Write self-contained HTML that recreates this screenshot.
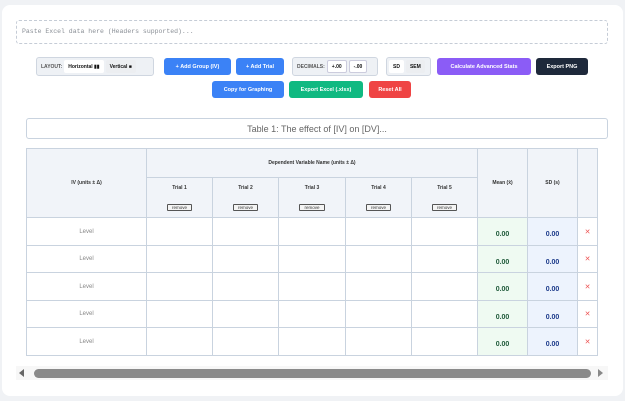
<!DOCTYPE html>
<html><head><style>
*{box-sizing:border-box;margin:0;padding:0}
body{width:625px;height:401px;background:#f0f2f5;font-family:"Liberation Sans",sans-serif;position:relative;overflow:hidden}
.card{position:absolute;left:2px;top:5px;width:621px;height:391px;background:#fff;border-radius:8px}
.abs{position:absolute}
.ta{left:16px;top:20px;width:592px;height:24px;border:1px dashed #c5ccd6;border-radius:3px;font-family:"Liberation Mono",monospace;font-size:6.5px;color:#8a8f96;padding:7px 5px}
.btn{position:absolute;height:17px;border-radius:3px;color:#fff;font-size:5.5px;font-weight:bold;display:flex;align-items:center;justify-content:center}
.grp{position:absolute;height:19px;border:1px solid #cfd6e0;border-radius:3px;background:#eef1f5;font-size:5px;font-weight:bold;color:#555;display:flex;align-items:center;padding-left:4px;gap:2px}
.opt{background:#fff;border-radius:2px;height:13px;display:flex;align-items:center;padding:0 4px;color:#111}
.opt.off{background:#eceef1}
table{position:absolute;left:26px;top:148px;border-collapse:collapse;font-size:5px}
td,th{border:1px solid #c9d3df;text-align:center}
th{background:#f1f4f9;font-weight:bold;color:#333}
.rm{display:inline-block;border:1px solid #555;border-radius:1px;font-size:4.5px;line-height:5px;padding:0 4px;font-weight:normal;color:#333;margin-top:13px;background:#f4f4f4}
.lv{color:#888;font-size:6px}
.m{background:#effaf2;color:#1f5a3a;font-weight:bold;font-size:7px;padding-top:6px}
.s{background:#edf3fd;color:#1c3a8a;font-weight:bold;font-size:7px;padding-top:6px}
.x{color:#e55;font-size:7px;vertical-align:middle}
</style></head><body>
<div class="card"></div>
<div class="abs ta">Paste Excel data here (Headers supported)...</div>
<div class="grp" style="left:36px;top:57px;width:118px">LAYOUT: <span class="opt">Horizontal ▮▮</span><span class="opt off">Vertical ■</span></div>
<div class="btn" style="left:164px;top:58px;width:67px;background:#3b82f6">+ Add Group (IV)</div>
<div class="btn" style="left:236px;top:58px;width:48px;background:#3b82f6">+ Add Trial</div>
<div class="grp" style="left:292px;top:57px;width:86px">DECIMALS: <span class="opt" style="border:1px solid #ccd">+.00</span><span class="opt" style="border:1px solid #ccd">-.00</span></div>
<div class="grp" style="left:386px;top:57px;width:45px;padding-left:2px">
<span class="opt">SD</span><span class="opt off">SEM</span></div>
<div class="btn" style="left:437px;top:58px;width:94px;background:#8b5cf6">Calculate Advanced Stats</div>
<div class="btn" style="left:536px;top:58px;width:52px;background:#1e293b">Export PNG</div>
<div class="btn" style="left:212px;top:81px;width:72px;background:#3b82f6">Copy for Graphing</div>
<div class="btn" style="left:289px;top:81px;width:74px;background:#10b981">Export Excel (.xlsx)</div>
<div class="btn" style="left:369px;top:81px;width:42px;background:#ef4444">Reset All</div>
<div class="abs" style="left:26px;top:118px;width:582px;height:21px;border:1px solid #c9d3df;border-radius:3px;font-size:9px;color:#666;text-align:center;line-height:20px">Table 1: The effect of [IV] on [DV]...</div>
<table>
<tr style="height:29px"><th rowspan="2" style="width:120px">IV (units ± Δ)</th><th colspan="5">Dependent Variable Name (units ± Δ)</th><th rowspan="2" style="width:50px">Mean (x̄)</th><th rowspan="2" style="width:50px">SD (s)</th><th rowspan="2" style="width:20px"></th></tr>
<tr style="height:40px"><th style="width:66px">Trial 1<br><span class="rm">remove</span></th><th style="width:66px">Trial 2<br><span class="rm">remove</span></th><th style="width:67px">Trial 3<br><span class="rm">remove</span></th><th style="width:66px">Trial 4<br><span class="rm">remove</span></th><th style="width:66px">Trial 5<br><span class="rm">remove</span></th></tr>
<tr style="height:28px"><td class="lv">Level</td><td></td><td></td><td></td><td></td><td></td><td class="m">0.00</td><td class="s">0.00</td><td class="x">✕</td></tr>
<tr style="height:27px"><td class="lv">Level</td><td></td><td></td><td></td><td></td><td></td><td class="m">0.00</td><td class="s">0.00</td><td class="x">✕</td></tr>
<tr style="height:28px"><td class="lv">Level</td><td></td><td></td><td></td><td></td><td></td><td class="m">0.00</td><td class="s">0.00</td><td class="x">✕</td></tr>
<tr style="height:27px"><td class="lv">Level</td><td></td><td></td><td></td><td></td><td></td><td class="m">0.00</td><td class="s">0.00</td><td class="x">✕</td></tr>
<tr style="height:28px"><td class="lv">Level</td><td></td><td></td><td></td><td></td><td></td><td class="m">0.00</td><td class="s">0.00</td><td class="x">✕</td></tr>
</table>
<div class="abs" style="left:16px;top:366px;width:592px;height:14px;background:#f7f7f7"></div>
<div class="abs" style="left:34px;top:369px;width:557px;height:9px;background:#8a8a8a;border-radius:5px"></div>
<div class="abs" style="left:19px;top:369px;width:0;height:0;border-top:4px solid transparent;border-bottom:4px solid transparent;border-right:5px solid #666"></div>
<div class="abs" style="left:598px;top:369px;width:0;height:0;border-top:4px solid transparent;border-bottom:4px solid transparent;border-left:5px solid #888"></div>
</body></html>
